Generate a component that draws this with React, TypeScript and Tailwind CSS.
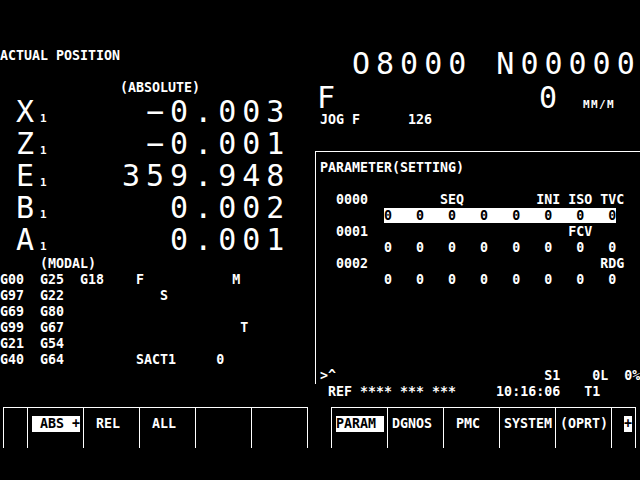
import React from "react";

const small = "font-bold text-[13.3px] leading-4 whitespace-pre";
const big = "text-[30px] leading-8 tracking-[6px] whitespace-pre";

const axes = [
  { letter: "X", value: " −0.003" },
  { letter: "Z", value: " −0.001" },
  { letter: "E", value: "359.948" },
  { letter: "B", value: "  0.002" },
  { letter: "A", value: "  0.001" },
];

const modal = [
  "G00  G25  G18    F           M",
  "G97  G22            S",
  "G69  G80",
  "G99  G67                      T",
  "G21  G54",
  "G40  G64         SACT1     0",
];

const bits = "0   0   0   0   0   0   0   0";

const App: React.FC = () => {
  return (
    <div className="w-[640px] h-[480px] bg-black text-white overflow-hidden font-['DejaVu_Sans_Mono',monospace] flex flex-col">
      {/* Upper screen */}
      <div className="flex h-[407px]">
        {/* Position */}
        <div className="w-[315px] shrink-0 pt-12 flex flex-col">
          <div className={small}>ACTUAL POSITION</div>
          <div className={`${small} mt-4 pl-[120px]`}>(ABSOLUTE)</div>
          {axes.map((a) => (
            <div key={a.letter} className="flex h-8 items-baseline">
              <div className="w-[122px] pl-[16px] flex items-baseline">
                <span className={big}>{a.letter}</span>
                <span className="text-[11px] font-bold leading-none">1</span>
              </div>
              <span className={big}>{a.value}</span>
            </div>
          ))}
          <div className={`${small} pl-[40px]`}>(MODAL)</div>
          {modal.map((line, i) => (
            <div key={i} className={small}>
              {line}
            </div>
          ))}
        </div>

        {/* Program / parameter */}
        <div className="flex-1 min-w-0 pt-12 flex flex-col">
          <div className={`${big} h-8 pl-[37px]`}>O8000 N00000</div>
          <div className="flex items-baseline h-[29px] mt-[3px] pl-[2px]">
            <span className={`${big} w-[222px] leading-[30px]`}>F</span>
            <span className={`${big} w-[44px] leading-[30px]`}>0</span>
            <span className="text-[11px] font-bold tracking-[1.4px]">MM/M</span>
          </div>
          <div className={`${small} pl-[5px]`}>JOG F      126</div>

          <div className="mt-[23px] h-[233px] border-t border-l border-white pt-2 pl-[4px] flex flex-col">
            <div className={small}>PARAMETER(SETTING)</div>
            <div className={`${small} mt-4`}>  0000         SEQ         INI ISO TVC</div>
            <div className={small}>
              {"        "}
              <span className="bg-white text-black">{bits}</span>
            </div>
            <div className={small}>  0001                         FCV</div>
            <div className={small}>{"        " + bits}</div>
            <div className={small}>  0002                             RDG</div>
            <div className={small}>{"        " + bits}</div>
            <div className={`${small} mt-auto`}>{">^                          S1    0L  0%"}</div>
          </div>
          <div className={`${small} pl-[5px]`}> REF **** *** ***     10:16:06   T1</div>
        </div>
      </div>

      {/* Soft keys */}
      <div className="flex">
        <div className="ml-[3px] flex h-[41px] border-t border-l border-white">
          <div className="w-6 border-r border-white" />
          <div className="w-14 border-r border-white pt-2 pl-1">
            <div className={`${small} w-12 bg-white text-black`}> ABS +</div>
          </div>
          <div className="w-14 border-r border-white pt-2 pl-1">
            <div className={small}> REL</div>
          </div>
          <div className="w-14 border-r border-white pt-2 pl-1">
            <div className={small}> ALL</div>
          </div>
          <div className="w-14 border-r border-white" />
          <div className="w-14 border-r border-white" />
        </div>
        <div className="ml-[23px] flex h-[41px] border-t border-l border-white">
          <div className="w-14 border-r border-white pt-2 pl-1">
            <div className={`${small} w-12 bg-white text-black`}>PARAM</div>
          </div>
          <div className="w-14 border-r border-white pt-2 pl-1">
            <div className={small}>DGNOS</div>
          </div>
          <div className="w-14 border-r border-white pt-2 pl-1">
            <div className={small}> PMC</div>
          </div>
          <div className="w-14 border-r border-white pt-2 pl-1">
            <div className={small}>SYSTEM</div>
          </div>
          <div className="w-14 border-r border-white pt-2 pl-1">
            <div className={small}>(OPRT)</div>
          </div>
          <div className="w-6 border-r border-white pt-2 pl-3">
            <div className={`${small} w-2 bg-white text-black`}>+</div>
          </div>
        </div>
      </div>
    </div>
  );
};

export default App;
